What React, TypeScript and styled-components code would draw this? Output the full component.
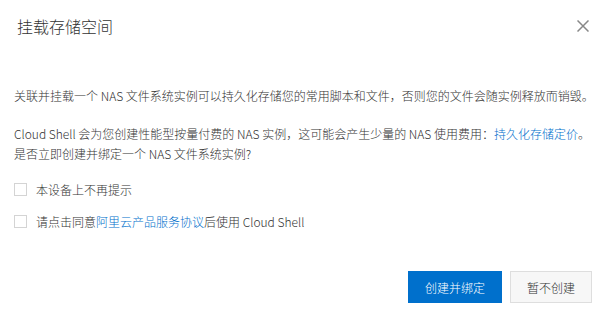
import React, { useState } from "react";
import styled, { createGlobalStyle } from "styled-components";

const GlobalStyle = createGlobalStyle`
  html, body {
    margin: 0;
    padding: 0;
    background: #ffffff;
  }
  body {
    font-family: "Noto Sans CJK SC", "Noto Sans", sans-serif;
    font-weight: 300;
    color: #333333;
  }
  * { box-sizing: border-box; }
`;

const Dialog = styled.div`
  width: 605px;
  height: 309px;
  background: #ffffff;
  display: flex;
  flex-direction: column;
`;

const Header = styled.div`
  display: flex;
  align-items: center;
  justify-content: space-between;
  padding: 16px 16px 16px 17px;
`;

const Title = styled.h2`
  margin: 0;
  font-size: 16px;
  line-height: 20px;
  font-weight: 300;
  color: #333333;
`;

const CloseButton = styled.button`
  width: 12px;
  height: 12px;
  padding: 0;
  border: none;
  background: transparent;
  display: flex;
  cursor: pointer;
  margin-top: -1px;
`;

const Body = styled.div`
  display: flex;
  flex-direction: column;
  padding: 34px 14px 0 14px;
`;

const Paragraph = styled.p<{ $gap?: number }>`
  margin: 0 0 ${(p) => p.$gap ?? 0}px 0;
  font-size: 12px;
  line-height: 20px;
  color: #333333;
  white-space: nowrap;
`;

const Link = styled.a`
  color: #0070cc;
  text-decoration: none;
  cursor: pointer;
`;

const CheckRow = styled.label<{ $gap?: number }>`
  display: flex;
  align-items: center;
  gap: 9px;
  height: 20px;
  margin-bottom: ${(p) => p.$gap ?? 0}px;
  font-size: 12px;
  color: #333333;
  cursor: pointer;
`;

const Box = styled.span<{ $checked: boolean }>`
  width: 13px;
  height: 13px;
  border: 1px solid #d4d4d4;
  background: ${(p) => (p.$checked ? "#0070cc" : "#ffffff")};
  display: inline-block;
  flex: none;
`;

const Footer = styled.div`
  display: flex;
  justify-content: flex-end;
  gap: 8px;
  padding: 40px 13px 0 0;
`;

const Button = styled.button<{ $primary?: boolean }>`
  height: 32px;
  padding: 0 16px;
  font-family: inherit;
  font-weight: 300;
  font-size: 12px;
  border: 1px solid ${(p) => (p.$primary ? "#0070cc" : "#dedede")};
  background: ${(p) => (p.$primary ? "#0070cc" : "#f7f7f7")};
  color: ${(p) => (p.$primary ? "#ffffff" : "#333333")};
  cursor: pointer;
`;

function CheckBox({ checked, onToggle }: { checked: boolean; onToggle: () => void }) {
  return <Box $checked={checked} onClick={onToggle} />;
}

export default function App() {
  const [a, setA] = useState(false);
  const [b, setB] = useState(false);
  return (
    <>
      <GlobalStyle />
      <Dialog>
        <Header>
          <Title>挂载存储空间</Title>
          <CloseButton aria-label="close">
            <svg width="12" height="12" viewBox="0 0 12 12">
              <path d="M0.5 0.5 L11.5 11.5 M11.5 0.5 L0.5 11.5" stroke="#888888" strokeWidth="1.5" fill="none" />
            </svg>
          </CloseButton>
        </Header>
        <Body>
          <Paragraph $gap={18}>
            关联并挂载一个 NAS 文件系统实例可以持久化存储您的常用脚本和文件，否则您的文件会随实例释放而销毁。
          </Paragraph>
          <Paragraph $gap={15}>
            Cloud Shell 会为您创建性能型按量付费的 NAS 实例，这可能会产生少量的 NAS 使用费用：<Link>持久化存储定价</Link>。
            <br />
            是否立即创建并绑定一个 NAS 文件系统实例?
          </Paragraph>
          <CheckRow $gap={12}>
            <CheckBox checked={a} onToggle={() => setA(!a)} />
            本设备上不再提示
          </CheckRow>
          <CheckRow>
            <CheckBox checked={b} onToggle={() => setB(!b)} />
            <span>
              请点击同意<Link>阿里云产品服务协议</Link>后使用 Cloud Shell
            </span>
          </CheckRow>
        </Body>
        <Footer>
          <Button $primary>创建并绑定</Button>
          <Button>暂不创建</Button>
        </Footer>
      </Dialog>
    </>
  );
}
